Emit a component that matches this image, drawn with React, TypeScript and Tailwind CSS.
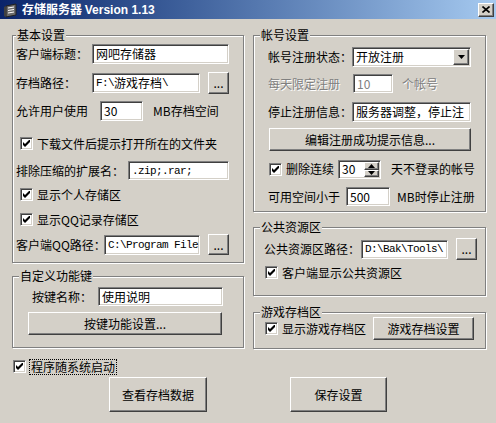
import type { ReactNode } from "react"

function Group({ label, labelPos, className, children }: { label: string; labelPos: string; className: string; children: ReactNode }) {
  return (
    <div className={`relative border border-[#808080] shadow-[1px_1px_0_#fff,inset_1px_1px_0_#fff] ${className}`}>
      <span className={`absolute top-[-8px] ${labelPos} bg-[#d4d0c8] px-[1px] leading-[14px]`}>{label}</span>
      {children}
    </div>
  )
}

function Edit({ className, children }: { className: string; children?: ReactNode }) {
  return (
    <div
      className={`flex items-center bg-white pl-[3px] overflow-hidden whitespace-nowrap border border-t-[#808080] border-l-[#808080] border-r-white border-b-white shadow-[inset_1px_1px_0_#404040,inset_-1px_-1px_0_#d4d0c8] ${className}`}
    >
      {children}
    </div>
  )
}

function Btn({ className, children }: { className: string; children?: ReactNode }) {
  return (
    <div
      className={`flex items-center justify-center shrink-0 bg-[#d4d0c8] border border-t-white border-l-white border-r-[#404040] border-b-[#404040] shadow-[inset_-1px_-1px_0_#808080] ${className}`}
    >
      {children}
    </div>
  )
}

function Box() {
  return (
    <div className="w-[13px] h-[13px] shrink-0 flex items-center justify-center bg-white border border-t-[#808080] border-l-[#808080] border-r-white border-b-white shadow-[inset_1px_1px_0_#404040,inset_-1px_-1px_0_#d4d0c8]">
      <svg width="7" height="7" viewBox="0 0 7 7">
        <path d="M0 2 L2 4 L7 -1 L7 2 L2 7 L0 5 Z" fill="#000" />
      </svg>
    </div>
  )
}

function Check({ className, children }: { className?: string; children: ReactNode }) {
  return (
    <div className={`flex items-center h-[13px] ${className ?? ""}`}>
      <Box />
      <span className="ml-[4px] whitespace-nowrap">{children}</span>
    </div>
  )
}

// ascii inside edit boxes looks like SimSun's 6px-wide glyphs
function M({ children }: { children: ReactNode }) {
  return <span className="font-['Liberation_Mono',monospace] text-[11px] tracking-[-0.6px]">{children}</span>
}

function Arrow({ up }: { up?: boolean }) {
  return (
    <svg width="7" height="4" viewBox="0 0 7 4">
      <polygon points={up ? "3.5,0 7,4 0,4" : "0,0 7,0 3.5,4"} fill="#000" />
    </svg>
  )
}

function Disabled({ children, className }: { children: ReactNode; className?: string }) {
  return <span className={`text-[#808080] [text-shadow:1px_1px_0_#fff] whitespace-nowrap ${className ?? ""}`}>{children}</span>
}

export default function App() {
  return (
    <div className="w-[496px] h-[423px] overflow-hidden bg-[#d4d0c8] text-black text-[12px] leading-[14px] font-['Noto_Sans_CJK_SC',sans-serif]">
      {/* Title bar */}
      <div className="h-[19px] flex items-center bg-linear-to-r from-[#0a246a] to-[#a6caf0]">
        <svg className="ml-[3px]" width="16" height="16" viewBox="0 0 16 16">
          <path d="M3 4 L13 2 L13 13 L3 15 Z" fill="#6b6b6b" stroke="#202020" />
          <path d="M5 6 L11 5 M5 8.5 L11 7.5 M5 11 L11 10" stroke="#fff" />
          <path d="M1 5 L3 4 L3 15 L1 14 Z" fill="#404040" />
        </svg>
        <span className="ml-[3px] text-white font-bold whitespace-nowrap">
          存储服务器 <span className="font-['Liberation_Sans',sans-serif]">Version 1.13</span>
        </span>
        <Btn className="ml-auto mr-[2px] w-[16px] h-[14px]">
          <svg width="8" height="7" viewBox="0 0 8 7">
            <path d="M0.5 0.5 L7.5 6.5 M7.5 0.5 L0.5 6.5" stroke="#000" strokeWidth="1.6" />
          </svg>
        </Btn>
      </div>

      <div className="flex pl-[12px] mt-[16px]">
        {/* Left column */}
        <div className="w-[232px] flex flex-col">
          <Group label="基本设置" labelPos="left-[3px]" className="h-[228px]">
            <div className="flex items-center mt-[8px] h-[20px] pl-[3px]">
              <span className="w-[76px] whitespace-nowrap">客户端标题：</span>
              <Edit className="w-[137px] h-[20px]">网吧存储器</Edit>
            </div>
            <div className="flex items-center mt-[8px] h-[22px] pl-[3px]">
              <span className="w-[76px] whitespace-nowrap">存档路径：</span>
              <Edit className="w-[108px] h-[20px]">
                <M>F:\</M>游戏存档<M>\</M>
              </Edit>
              <Btn className="ml-[8px] w-[21px] h-[22px]">...</Btn>
            </div>
            <div className="flex items-center mt-[7px] h-[20px] pl-[3px]">
              <span className="w-[84px] whitespace-nowrap">允许用户使用</span>
              <Edit className="w-[43px] h-[20px]">30</Edit>
              <span className="ml-[10px] whitespace-nowrap">MB存档空间</span>
            </div>
            <Check className="mt-[16px] pl-[7px]">下载文件后提示打开所在的文件夹</Check>
            <div className="flex items-center mt-[11px] h-[19px] pl-[3px]">
              <span className="w-[112px] whitespace-nowrap">排除压缩的扩展名：</span>
              <Edit className="w-[101px] h-[19px]">
                <M>.zip;.rar;</M>
              </Edit>
            </div>
            <Check className="mt-[8px] pl-[7px]">显示个人存储区</Check>
            <Check className="mt-[12px] pl-[7px]">显示QQ记录存储区</Check>
            <div className="flex items-center mt-[8px] h-[21px] pl-[3px]">
              <span className="w-[88px] whitespace-nowrap">客户端QQ路径：</span>
              <Edit className="w-[96px] h-[20px]">
                <M>C:\Program File</M>
              </Edit>
              <Btn className="ml-[8px] w-[21px] h-[21px]">...</Btn>
            </div>
          </Group>

          <Group label="自定义功能键" labelPos="left-[6px]" className="mt-[13px] h-[72px]">
            <div className="flex items-center mt-[10px] h-[19px] pl-[19px]">
              <span className="w-[66px] whitespace-nowrap">按键名称：</span>
              <Edit className="w-[125px] h-[19px]">使用说明</Edit>
            </div>
            <Btn className="mt-[6px] ml-[15px] w-[194px] h-[23px]">按键功能设置...</Btn>
          </Group>
        </div>

        {/* Right column */}
        <div className="ml-[9px] w-[233px] flex flex-col">
          <Group label="帐号设置" labelPos="left-[6px]" className="h-[177px]">
            <div className="flex items-center mt-[11px] h-[20px] pl-[14px]">
              <span className="w-[84px] whitespace-nowrap">帐号注册状态：</span>
              <Edit className="w-[119px] h-[20px]">
                <span>开放注册</span>
                <Btn className="ml-auto mr-[1px] w-[16px] h-[16px]">
                  <Arrow />
                </Btn>
              </Edit>
            </div>
            <div className="flex items-center mt-[7px] h-[19px] pl-[14px]">
              <Disabled className="w-[85px]">每天限定注册</Disabled>
              <Edit className="w-[40px] h-[19px]">
                <span className="text-[#808080]">10</span>
              </Edit>
              <Disabled className="ml-[9px]">个帐号</Disabled>
            </div>
            <div className="flex items-center mt-[9px] h-[20px] pl-[14px]">
              <span className="w-[84px] whitespace-nowrap">停止注册信息：</span>
              <Edit className="w-[119px] h-[20px]">服务器调整，停止注</Edit>
            </div>
            <Btn className="mt-[6px] ml-[15px] w-[202px] h-[23px]">编辑注册成功提示信息...</Btn>
            <div className="flex items-center mt-[8px] h-[20px] pl-[15px]">
              <Check>删除连续</Check>
              <Edit className="ml-[4px] w-[43px] h-[19px]">
                <span>30</span>
                <div className="ml-auto mr-[1px] flex flex-col w-[15px] h-[15px]">
                  <Btn className="h-[8px]">
                    <Arrow up />
                  </Btn>
                  <Btn className="h-[7px]">
                    <Arrow />
                  </Btn>
                </div>
              </Edit>
              <span className="ml-[10px] whitespace-nowrap">天不登录的帐号</span>
            </div>
            <div className="flex items-center mt-[8px] h-[19px] pl-[14px]">
              <span className="w-[78px] whitespace-nowrap">可用空间小于</span>
              <Edit className="w-[44px] h-[19px]">500</Edit>
              <span className="ml-[7px] whitespace-nowrap">MB时停止注册</span>
            </div>
          </Group>

          <Group label="公共资源区" labelPos="left-[6px]" className="mt-[15px] h-[69px]">
            <div className="flex items-center mt-[10px] h-[22px] pl-[10px]">
              <span className="w-[97px] whitespace-nowrap">公共资源区路径：</span>
              <Edit className="w-[87px] h-[19px]">
                <M>D:\Bak\Tools\</M>
              </Edit>
              <Btn className="ml-[8px] w-[21px] h-[22px]">...</Btn>
            </div>
            <Check className="mt-[6px] pl-[11px]">客户端显示公共资源区</Check>
          </Group>

          <Group label="游戏存档区" labelPos="left-[6px]" className="mt-[16px] h-[37px]">
            <div className="flex items-center mt-[4px] h-[23px] pl-[11px]">
              <Check>显示游戏存档区</Check>
              <Btn className="ml-[7px] w-[101px] h-[23px]">游戏存档设置</Btn>
            </div>
          </Group>
        </div>
      </div>

      {/* Startup option */}
      <div className="flex items-center mt-[11px] pl-[13px] h-[13px]">
        <Box />
        <span className="ml-[3px] px-[1px] border border-dotted border-black whitespace-nowrap">程序随系统启动</span>
      </div>

      {/* Bottom buttons */}
      <div className="flex mt-[4px] pl-[109px] gap-[83px]">
        <Btn className="w-[98px] h-[35px]">查看存档数据</Btn>
        <Btn className="w-[97px] h-[35px]">保存设置</Btn>
      </div>
    </div>
  )
}
